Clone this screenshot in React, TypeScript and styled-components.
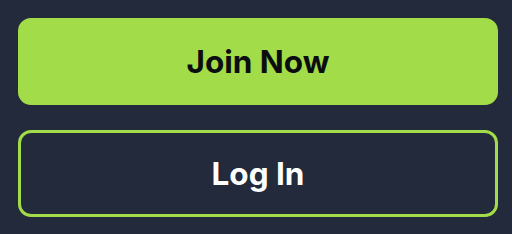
import React from "react";
import styled, { createGlobalStyle } from "styled-components";

const GlobalStyle = createGlobalStyle`
  html, body {
    margin: 0;
    padding: 0;
    background: #222a3b;
    font-family: Inter, "Liberation Sans", sans-serif;
  }
`;

const Container = styled.div`
  display: flex;
  flex-direction: column;
  gap: 25px;
  padding: 18px;
  width: 480px;
`;

const Button = styled.button<{ $variant: "solid" | "outline" }>`
  box-sizing: border-box;
  width: 100%;
  height: 87px;
  border-radius: 13px;
  font-family: Inter, "Liberation Sans", sans-serif;
  font-size: 31.5px;
  font-weight: 700;
  cursor: pointer;
  border: 3px solid #a2dc48;
  background: ${({ $variant }) => ($variant === "solid" ? "#a2dc48" : "transparent")};
  color: ${({ $variant }) => ($variant === "solid" ? "#0b0d10" : "#ffffff")};
`;

const App: React.FC = () => {
  return (
    <>
      <GlobalStyle />
      <Container>
        <Button $variant="solid">Join Now</Button>
        <Button $variant="outline">Log In</Button>
      </Container>
    </>
  );
};

export default App;
